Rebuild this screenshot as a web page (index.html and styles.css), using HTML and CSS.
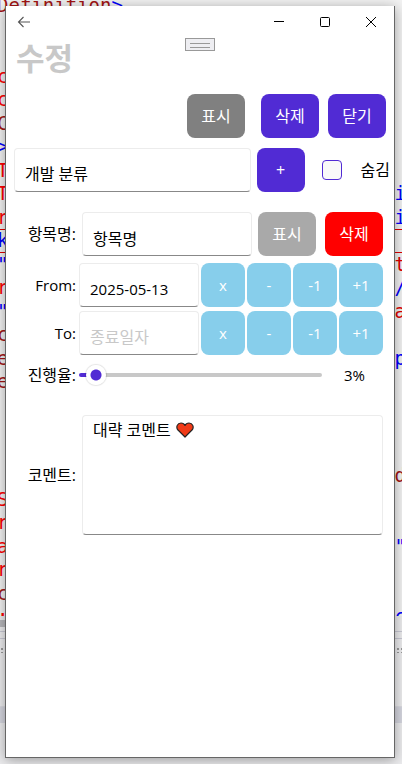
FILE: index.html
```
<!DOCTYPE html>
<html lang="ko">
<head>
    <title>수정</title>
    <meta charset="UTF-8">
    <meta name="viewport" content="width=device-width, initial-scale=1.0">
    <link rel="stylesheet" href="styles.css">
</head>
<body>
    <!-- editor behind the window -->
    <div class="desktop" aria-hidden="true">
        <div class="code">
            <div class="line tag"><span>Definition<b>&gt;</b></span></div>
            <div class="line"></div>
            <div class="line"></div>
            <div class="line attr"><span>c</span></div>
            <div class="line attr"><span>c</span></div>
            <div class="line tag"><span>C</span></div>
            <div class="line value"><span>&gt;</span></div>
            <div class="line attr"><span>T</span></div>
            <div class="line attr"><span>T</span><b>i</b></div>
            <div class="line attr"><span>r</span><b>i</b></div>
            <div class="line value marked"><span>k</span></div>
            <div class="line value"><span>"</span><i>t</i></div>
            <div class="line attr"><span>r</span><b>/</b></div>
            <div class="line value"><span>"</span><i>a</i></div>
            <div class="line tag"><span>c</span></div>
            <div class="line tag"><span>e</span><b>p</b></div>
            <div class="line tag"><span>e</span></div>
            <div class="line"></div>
            <div class="line"></div>
            <div class="line"></div>
            <div class="line tag"><span></span><span>d</span></div>
            <div class="line attr"><span>S</span></div>
            <div class="line attr"><span>r</span></div>
            <div class="line attr"><span>a</span><b>"</b></div>
            <div class="line attr"><span>r</span></div>
            <div class="line tag"><span>c</span></div>
            <div class="line attr"><span>:</span><b>c</b></div>
        </div>
        <div class="panel">
            <div class="panel-scroll"></div>
            <div class="panel-split"></div>
            <div class="panel-grip"></div>
            <div class="panel-tabs"></div>
        </div>
    </div>

    <main class="window">
        <header class="titlebar">
            <button class="caption-btn back" aria-label="뒤로">
                <svg width="14" height="12" viewBox="0 0 14 12"><path d="M13 6H1.5M6.5 1L1.5 6l5 5" fill="none" stroke="#555" stroke-width="1.1"/></svg>
            </button>
            <button class="caption-btn" aria-label="최소화">
                <svg width="10" height="10" viewBox="0 0 10 10"><path d="M0 4.5h10" stroke="#000"/></svg>
            </button>
            <button class="caption-btn" aria-label="최대화">
                <svg width="10" height="10" viewBox="0 0 10 10"><rect x=".5" y=".5" width="9" height="9" rx="1" fill="none" stroke="#000"/></svg>
            </button>
            <button class="caption-btn" aria-label="창 닫기">
                <svg width="10" height="10" viewBox="0 0 10 10"><path d="M0 0l10 10M10 0L0 10" stroke="#000"/></svg>
            </button>
        </header>
        <div class="handle"></div>

        <h1>수정</h1>

        <div class="actions">
            <button class="btn gray show-all">표시</button>
            <button class="btn primary">삭제</button>
            <button class="btn primary">닫기</button>
        </div>

        <div class="category">
            <select class="field picker" aria-label="분류">
                <option>개발 분류</option>
            </select>
            <button class="btn primary add">+</button>
            <input type="checkbox" class="check" id="hidden-check">
            <label for="hidden-check">숨김</label>
        </div>

        <div class="row name-row">
            <label class="caption" for="item-name">항목명:</label>
            <input type="text" class="field" id="item-name" value="항목명">
            <button class="btn silver">표시</button>
            <button class="btn danger">삭제</button>
        </div>

        <div class="row date-row">
            <label class="caption latin" for="date-from">From:</label>
            <input type="text" class="field latin" id="date-from" value="2025-05-13">
            <div class="steps">
                <button class="btn sky">x</button>
                <button class="btn sky">-</button>
                <button class="btn sky">-1</button>
                <button class="btn sky">+1</button>
            </div>
        </div>

        <div class="row date-row">
            <label class="caption latin" for="date-to">To:</label>
            <input type="text" class="field" id="date-to" placeholder="종료일자">
            <div class="steps">
                <button class="btn sky">x</button>
                <button class="btn sky">-</button>
                <button class="btn sky">-1</button>
                <button class="btn sky">+1</button>
            </div>
        </div>

        <div class="row progress-row">
            <label class="caption" for="progress">진행율:</label>
            <input type="range" class="slider" id="progress" min="0" max="100" value="3">
            <output class="latin" for="progress">3%</output>
        </div>

        <div class="row comment-row">
            <label class="caption" for="comment">코멘트:</label>
            <div class="comment">
                <textarea class="field" id="comment">대략 코멘트</textarea>
                <svg class="heart" width="18" height="16" viewBox="0 0 18 16"><path d="M9 15L2 8C-.5 5 1.500 1 5 1c2 0 3.300 1 4 2.500C9.700 2 11 1 13 1c3.500 0 5.500 4 3 7z" fill="#f03a17" stroke="#222" stroke-width="1.200" stroke-linejoin="round"/></svg>
            </div>
        </div>
    </main>
</body>
</html>
```

FILE: styles.css
```
* {
    box-sizing: border-box;
}
body {
    margin: 0;
    padding: 6px 7px 6px 5px;
    min-height: 100vh;
    overflow: hidden;
    background-color: #f2f2f2;
    color: #000;
    font: 16px/22px "Open Sans", "Noto Sans CJK KR", sans-serif;
}
button, input, select, textarea {
    margin: 0;
    font: inherit;
    color: inherit;
}
.latin {
    font-size: 15px;
}

/* editor in the background */
.desktop {
    position: absolute;
    inset: 0;
    overflow: hidden;
}
.code {
    display: grid;
    grid-auto-rows: 1fr;
    height: 635px;
    margin: -6px -4px 0 -3px;
    font: 19px/23px "DejaVu Sans Mono", monospace;
}
.line {
    display: flex;
    justify-content: space-between;
}
.line b, .line i {
    font-weight: normal;
    font-style: normal;
}
.line b { color: #00f; }
.line i { color: #e00000; }
.tag { color: #a31515; }
.attr { color: #f00; }
.value { color: #00f; }
.marked {
    border: solid #e00000;
    border-width: 1px 0;
    line-height: 21px;
}
.panel {
    position: relative;
    margin-top: -13px;
    padding: 4px 0 60px;
    background-color: #ececee;
}
.panel-scroll {
    width: 6px;
    height: 7px;
    background-color: #b8b8bc;
}
.panel-split {
    height: 8px;
    margin-top: 4px;
    border: solid #c9c9d4;
    border-width: 1px 0;
}
.panel-grip {
    height: 6px;
    margin: 8px 0 53px;
    background: radial-gradient(circle, #999 1px, transparent 1px) 0 0 / 4px 4px;
}
.panel-tabs {
    height: 17px;
    border-top: 1px solid #dcdce2;
    background-color: #d5d6df;
}

/* window */
.window {
    position: relative;
    min-height: calc(100vh - 12px);
    border: 1px solid #666;
    border-top: 0;
    background-color: #fff;
    box-shadow: 0 2px 12px rgba(0,0,0,0.35);
}
.titlebar {
    display: flex;
    height: 32px;
}
.caption-btn {
    display: flex;
    align-items: center;
    justify-content: center;
    width: 46px;
    padding: 0;
    border: 0;
    background: none;
}
.back {
    width: 36px;
    margin-right: auto;
}
.handle {
    position: absolute;
    top: 32px;
    left: 50%;
    width: 30px;
    height: 13px;
    margin-left: -15px;
    padding: 4px;
    border: 1px solid #999;
    background-color: #eeeef2;
}
.handle::before {
    content: "";
    display: block;
    height: 3px;
    border: solid #999;
    border-width: 1px 0;
}
h1 {
    margin: 0 10px;
    color: #c8c8c8;
    font-size: 31px;
    line-height: 40px;
}
.btn {
    flex: none;
    width: 58px;
    height: 44px;
    padding: 0;
    border: 0;
    border-radius: 8px;
    color: #fff;
}
.primary { background-color: #512bd4; }
.gray { background-color: #808080; }
.silver { background-color: #a9a9a9; }
.danger { background-color: #f00; }
.sky { background-color: #87ceeb; }

.field {
    display: block;
    flex: 1;
    min-width: 0;
    height: 44px;
    padding: 8px 10px 0;
    border: 1px solid #ececec;
    border-bottom-color: #888;
    border-radius: 4px;
    background-color: #fff;
    outline: 0;
}
.field::placeholder {
    color: #c8c8c8;
    opacity: 1;
}
.actions {
    display: flex;
    justify-content: flex-end;
    gap: 9px;
    padding: 16px 8px 10px;
}
.show-all {
    margin-right: 7px;
}
.category {
    display: flex;
    align-items: center;
    padding: 0 4px 20px 8px;
}
.picker {
    appearance: none;
}
.add {
    width: 48px;
    margin: 0 17px 0 6px;
}
.check {
    appearance: none;
    width: 20px;
    height: 20px;
    margin-right: 19px;
    border: 1px solid #512bd4;
    border-radius: 4px;
    background-color: #f9f9f9;
}
.row {
    display: flex;
    align-items: center;
    padding-right: 11px;
}
.caption {
    flex: none;
    width: 70px;
    text-align: right;
}
.name-row {
    margin-bottom: 7px;
}
.name-row .field {
    margin: 0 6px;
}
.name-row .danger {
    margin-left: 9px;
}
.date-row {
    margin-bottom: 4px;
}
.date-row .field {
    margin: 0 2px 0 3px;
}
.steps {
    display: flex;
    gap: 2px;
}
.steps .btn {
    width: 44px;
    font-size: 15px;
}
.slider {
    appearance: none;
    flex: 1;
    min-width: 0;
    height: 20px;
    margin: 0 22px 0 3px;
    background: none;
}
.slider::-webkit-slider-runnable-track {
    height: 4px;
    border-radius: 2px;
    background: linear-gradient(to right, #512bd4 16px, #c8c8c8 16px);
}
.slider::-webkit-slider-thumb {
    appearance: none;
    width: 20px;
    height: 20px;
    margin-top: -8px;
    border-radius: 50%;
    background: radial-gradient(circle, #512bd4 5px, #fff 6px);
    box-shadow: 0 0 1px 1px rgba(0,0,0,0.1);
}
.progress-row {
    padding: 5px 29px 0 0;
}
.comment-row {
    padding-top: 29px;
}
.comment {
    position: relative;
    flex: 1;
    margin-left: 6px;
}
.comment .field {
    width: 100%;
    height: 120px;
    padding-top: 3px;
    resize: none;
}
.heart {
    position: absolute;
    top: 7px;
    left: 94px;
}
```
